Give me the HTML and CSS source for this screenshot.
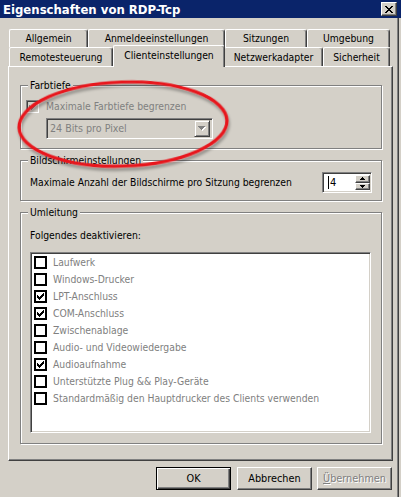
FILE: index.html
```html
<!DOCTYPE html>
<html lang="de">
<head>
    <meta charset="UTF-8">
    <title>Eigenschaften von RDP-Tcp</title>
    <link rel="stylesheet" href="styles.css">
</head>
<body>
<div class="window">
    <div class="titlebar">
        <span class="title">Eigenschaften von RDP-Tcp</span>
        <span class="close-btn">
            <svg width="8" height="7" viewBox="0 0 8 7" shape-rendering="crispEdges"><path fill="#000" d="M0 0h2v1H0z M6 0h2v1H6z M1 1h2v1H1z M5 1h2v1H5z M2 2h4v1H2z M3 3h2v1H3z M2 4h4v1H2z M1 5h2v1H1z M5 5h2v1H5z M0 6h2v1H0z M6 6h2v1H6z"/></svg>
        </span>
    </div>

    <div class="tabs">
        <div class="tab-row back">
            <div class="tab w-allg">Allgemein</div>
            <div class="tab w-anm">Anmeldeeinstellungen</div>
            <div class="tab w-sitz">Sitzungen</div>
            <div class="tab w-umg">Umgebung</div>
        </div>
        <div class="tab-row front">
            <div class="tab w-rem">Remotesteuerung</div>
            <div class="tab w-cli selected">Clienteinstellungen</div>
            <div class="tab w-netz">Netzwerkadapter</div>
            <div class="tab w-sich">Sicherheit</div>
        </div>
    </div>

    <div class="panel">
        <fieldset class="group g-farbe">
            <legend>Farbtiefe</legend>
            <div class="check-line disabled">
                <span class="cb-sunken">
                    <svg width="7" height="7" viewBox="0 0 7 7" shape-rendering="crispEdges"><path fill="#808080" d="M6 0h1v1H6z M5 1h2v1H5z M0 2h1v1H0z M4 2h3v1H4z M0 3h2v1H0z M3 3h3v1H3z M0 4h5v1H0z M1 5h3v1H1z M2 6h1v1H2z"/></svg>
                </span>
                <span>Maximale Farbtiefe begrenzen</span>
            </div>
            <div class="combo">
                <span class="combo-text">24 Bits pro Pixel</span>
                <span class="combo-btn">
                    <svg width="8" height="5" viewBox="0 0 8 5" shape-rendering="crispEdges">
                        <path fill="#fff" d="M1 1h7v1H1z M2 2h5v1H2z M3 3h3v1H3z M4 4h1v1H4z"/>
                        <path fill="#808080" d="M0 0h7v1H0z M1 1h5v1H1z M2 2h3v1H2z M3 3h1v1H3z"/>
                    </svg>
                </span>
            </div>
        </fieldset>

        <fieldset class="group g-screen">
            <legend>Bildschirmeinstellungen</legend>
            <div class="screen-line">
                <span>Maximale Anzahl der Bildschirme pro Sitzung begrenzen</span>
                <div class="spin">
                    <span class="spin-value"><span class="caret"></span>4</span>
                    <span class="spin-btns">
                        <span class="spin-btn">
                            <svg width="5" height="3" viewBox="0 0 5 3" shape-rendering="crispEdges"><path fill="#000" d="M2 0h1v1H2z M1 1h3v1H1z M0 2h5v1H0z"/></svg>
                        </span>
                        <span class="spin-btn">
                            <svg width="5" height="3" viewBox="0 0 5 3" shape-rendering="crispEdges"><path fill="#000" d="M0 0h5v1H0z M1 1h3v1H1z M2 2h1v1H2z"/></svg>
                        </span>
                    </span>
                </div>
            </div>
        </fieldset>

        <fieldset class="group g-redir">
            <legend>Umleitung</legend>
            <div class="redir-label">Folgendes deaktivieren:</div>
            <div class="listbox">
                <div class="item"><span class="cb"></span>Laufwerk</div>
                <div class="item"><span class="cb"></span>Windows-Drucker</div>
                <div class="item"><span class="cb checked"></span>LPT-Anschluss</div>
                <div class="item"><span class="cb checked"></span>COM-Anschluss</div>
                <div class="item"><span class="cb"></span>Zwischenablage</div>
                <div class="item"><span class="cb"></span>Audio- und Videowiedergabe</div>
                <div class="item"><span class="cb checked"></span>Audioaufnahme</div>
                <div class="item"><span class="cb"></span>Unterstützte Plug &amp;&amp; Play-Geräte</div>
                <div class="item"><span class="cb"></span>Standardmäßig den Hauptdrucker des Clients verwenden</div>
            </div>
        </fieldset>
    </div>

    <div class="buttons">
        <button class="btn default">OK</button>
        <button class="btn">Abbrechen</button>
        <button class="btn disabled"><u>Ü</u>bernehmen</button>
    </div>

    <!-- rote Markierung -->
    <svg class="annotation" width="401" height="497" viewBox="0 0 401 497">
        <defs>
            <filter id="shade" x="-10%" y="-20%" width="120%" height="140%">
                <feDropShadow dx="1" dy="3" stdDeviation="1.5" flood-color="#000" flood-opacity="0.35"/>
            </filter>
        </defs>
        <ellipse cx="123" cy="124" rx="104" ry="42" transform="rotate(-2 123 124)" fill="none" stroke="#e8141c" stroke-width="3.2" filter="url(#shade)"/>
    </svg>
</div>
</body>
</html>
```

FILE: styles.css
```css
* {
    box-sizing: border-box;
}
html, body {
    margin: 0;
    padding: 0;
}
body {
    background: #d4d0c8;
    font-family: "DejaVu Sans Condensed", "Liberation Sans", Arial, sans-serif;
    font-size: 10.3px;
    line-height: 13px;
    color: #000;
}
.window {
    position: relative;
    width: 401px;
    height: 497px;
    overflow: hidden;
    background: #d4d0c8;
    box-shadow: inset -2px 0 #d4d0c8, inset -3px 0 #404040, inset -4px 0 #808080;
}

/* Titelleiste */
.titlebar {
    height: 18px;
    background: #0a246a;
    display: flex;
    align-items: center;
    justify-content: space-between;
    padding: 0 4px 0 3px;
}
.title {
    color: #fff;
    font-weight: bold;
    font-size: 13px;
}
.close-btn {
    width: 16px;
    height: 14px;
    background: #d4d0c8;
    border: 1px solid;
    border-color: #fff #404040 #404040 #fff;
    box-shadow: inset -1px -1px #808080;
    display: flex;
    align-items: center;
    justify-content: center;
}

/* Registerkarten */
.tabs {
    margin-top: 11px;
}
.tab-row {
    display: flex;
    align-items: flex-start;
    padding-left: 9px;
}
.tab-row.back {
    height: 18px;
}
.tab-row.front {
    height: 19px;
}
.tab {
    height: 100%;
    display: flex;
    align-items: center;
    justify-content: center;
    white-space: nowrap;
    border-top: 1px solid #fff;
    border-left: 1px solid #fff;
    border-right: 1px solid #404040;
    box-shadow: inset -1px 0 #808080;
    border-radius: 2px 3px 0 0;
    background: #d4d0c8;
}
.tab.selected {
    position: relative;
    z-index: 1;
    height: 22px;
    margin-top: -2px;
    margin-right: -1px;
    padding-bottom: 3px;
}
.w-allg { width: 79px; }
.w-anm { width: 137px; }
.w-sitz { width: 82px; }
.w-umg { width: 83px; }
.w-rem { width: 104px; }
.w-cli { width: 112px; }
.w-netz { width: 99px; }
.w-sich { width: 67px; }

/* Hauptbereich */
.panel {
    margin-left: 8px;
    width: 385px;
    height: 395px;
    border: 1px solid;
    border-color: #fff #404040 #404040 #fff;
    box-shadow: inset -1px -1px #808080;
    padding: 12px 10px 0 11px;
}
.group {
    margin: 0;
    padding: 0;
    min-width: 0;
    border: 1px solid #808080;
    box-shadow: inset 1px 1px #fff, 1px 1px #fff;
}
.group legend {
    margin-left: 7px;
    padding: 0 2px;
    line-height: 13px;
    background: #d4d0c8;
}
.g-farbe {
    padding: 8px 0 9px 0;
}
.g-screen {
    margin-top: 5px;
    padding: 5px 0 7px 0;
}
.g-redir {
    margin-top: 5px;
    padding: 10px 0 10px 0;
}

.check-line {
    display: flex;
    align-items: center;
    gap: 7px;
    height: 13px;
    margin-left: 5px;
}
.check-line.disabled {
    color: #808080;
}
.cb-sunken {
    width: 13px;
    height: 13px;
    border: 1px solid;
    border-color: #808080 #fff #fff #808080;
    box-shadow: inset 1px 1px #404040, inset -1px -1px #d4d0c8;
    background: #d4d0c8;
    display: flex;
    align-items: center;
    justify-content: center;
}

.combo {
    margin: 5px 0 0 25px;
    width: 167px;
    height: 21px;
    display: flex;
    align-items: center;
    justify-content: space-between;
    border: 1px solid;
    border-color: #808080 #fff #fff #808080;
    box-shadow: inset 1px 1px #404040, inset -1px -1px #d4d0c8;
    padding: 1px 2px 1px 3px;
    color: #808080;
    font-size: 10.6px;
}
.combo-btn {
    width: 16px;
    height: 17px;
    border: 1px solid;
    border-color: #d4d0c8 #404040 #404040 #d4d0c8;
    box-shadow: inset 1px 1px #fff, inset -1px -1px #808080;
    display: flex;
    align-items: center;
    justify-content: center;
}

.screen-line {
    display: flex;
    align-items: center;
    justify-content: space-between;
    padding: 0 9px;
}
.spin {
    width: 50px;
    height: 21px;
    display: flex;
    align-items: stretch;
    border: 1px solid;
    border-color: #808080 #fff #fff #808080;
    box-shadow: inset 1px 1px #404040, inset -1px -1px #d4d0c8;
    background: #fff;
    padding: 2px 1px 2px 2px;
}
.spin-value {
    flex: 1;
    display: flex;
    align-items: center;
    padding-left: 3px;
    font-size: 11px;
}
.caret {
    width: 1px;
    height: 13px;
    background: #000;
    margin-right: 1px;
}
.spin-btns {
    width: 15px;
    display: flex;
    flex-direction: column;
}
.spin-btn {
    flex: 1;
    background: #d4d0c8;
    border: 1px solid;
    border-color: #fff #404040 #404040 #fff;
    box-shadow: inset -1px -1px #808080;
    display: flex;
    align-items: center;
    justify-content: center;
}

.redir-label {
    height: 13px;
    margin-left: 9px;
}
.listbox {
    margin: 10px 0 0 9px;
    width: 341px;
    height: 181px;
    background: #fff;
    border: 1px solid;
    border-color: #808080 #fff #fff #808080;
    box-shadow: inset 1px 1px #404040, inset -1px -1px #d4d0c8;
    padding: 1px 2px 2px 3px;
    color: #808080;
}
.item {
    height: 17px;
    display: flex;
    align-items: center;
    gap: 6px;
    white-space: nowrap;
}
.cb {
    width: 13px;
    height: 13px;
    border: 2px solid #000;
    background: #fff;
    flex: none;
}
.cb.checked {
    background: #fff url("data:image/svg+xml,%3Csvg xmlns='http://www.w3.org/2000/svg' width='7' height='7' shape-rendering='crispEdges'%3E%3Cpath d='M6 0h1v1H6z M5 1h2v1H5z M0 2h1v1H0z M4 2h3v1H4z M0 3h2v1H0z M3 3h3v1H3z M0 4h5v1H0z M1 5h3v1H1z M2 6h1v1H2z'/%3E%3C/svg%3E") no-repeat 1px 1px;
}

/* Schaltflächen */
.buttons {
    display: flex;
    justify-content: flex-end;
    gap: 5px;
    margin-top: 6px;
    padding-right: 9px;
}
.btn {
    width: 75px;
    height: 23px;
    padding: 0;
    font: inherit;
    font-size: 10.8px;
    color: #000;
    background: #d4d0c8;
    border: 1px solid;
    border-color: #fff #404040 #404040 #fff;
    box-shadow: inset -1px -1px #808080;
}
.btn.default {
    margin-right: 1px;
    border: 1px solid #000;
    box-shadow: inset 1px 1px #fff, inset -1px -1px #404040, inset -2px -2px #808080;
}
.btn.disabled {
    color: #808080;
    text-shadow: 1px 1px #fff;
}
.btn u {
    text-decoration: underline;
}

.annotation {
    position: absolute;
    left: 0;
    top: 0;
    pointer-events: none;
}
```
